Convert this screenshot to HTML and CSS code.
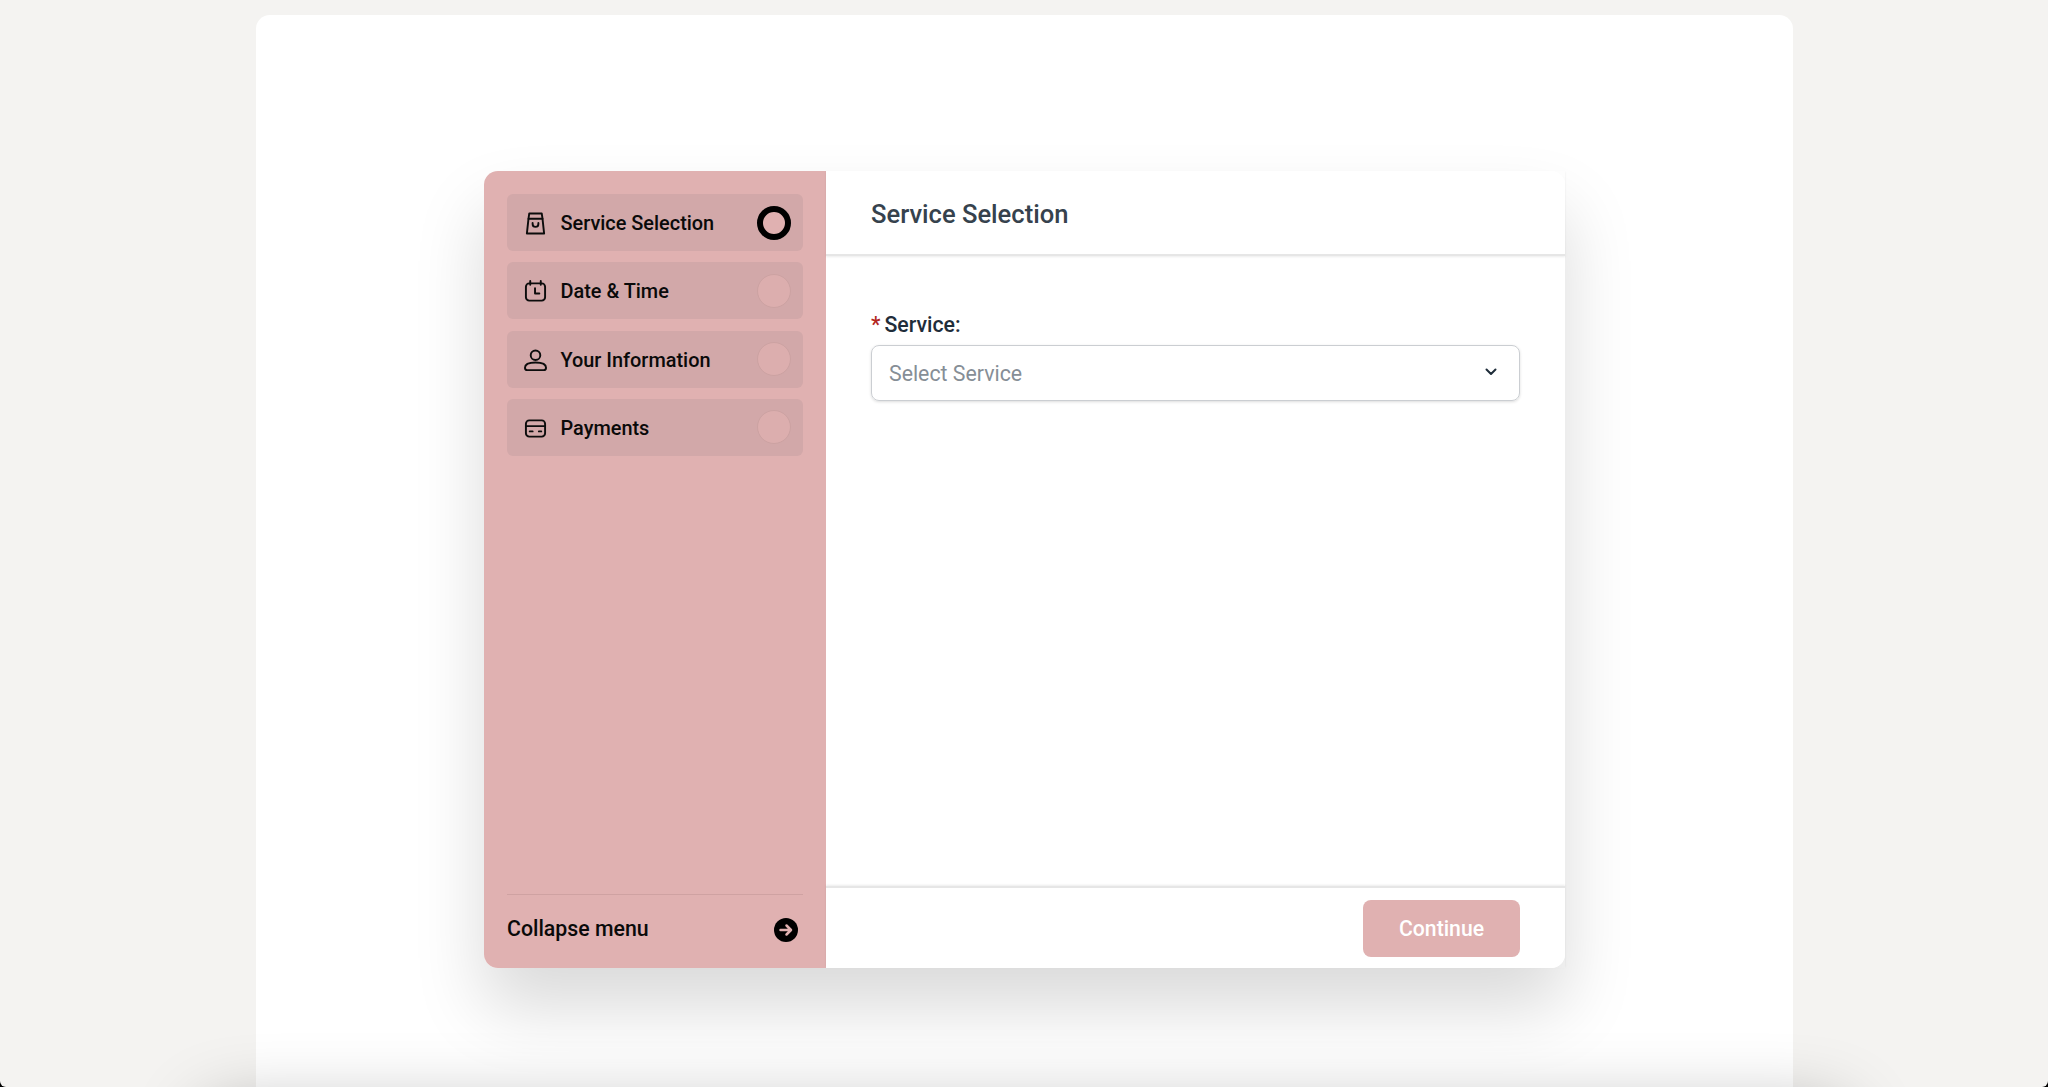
FILE: index.html
```html
<!DOCTYPE html>
<html lang="en">
<head>
    <meta charset="UTF-8">
    <meta name="viewport" content="width=device-width, initial-scale=1.0">
    <title>Booking</title>
    <link rel="stylesheet" href="styles.css">
</head>
<body>
    <div class="page-card">
        <div class="booking">
            <aside class="sidebar">
                <ul class="steps">
                    <li class="step">
                        <svg class="step-icon" viewBox="0 0 24 24"><path d="M5.500 1.500h13l.8 5.500 1.700 15.500H3L4.700 7z"/><path d="M4.700 7h14.600"/><path d="M9 11.500v1a3 3 0 0 0 6 0v-1"/></svg>
                        <span class="step-label">Service Selection</span>
                        <span class="step-dot active"></span>
                    </li>
                    <li class="step">
                        <svg class="step-icon" viewBox="0 0 24 24"><rect x="2" y="3.500" width="20" height="18" rx="3.500"/><path d="M6.500 1v4M17.500 1v4"/><path d="M11.500 8.500v5.500H16"/></svg>
                        <span class="step-label">Date &amp; Time</span>
                        <span class="step-dot"></span>
                    </li>
                    <li class="step">
                        <svg class="step-icon" viewBox="0 0 24 24"><circle cx="12" cy="6.500" r="5"/><path d="M1 19.500c0-3.800 4.900-5.500 11-5.500s11 1.700 11 5.500c0 1.600-1 2.500-2.400 2.500H3.400C2 22 1 21.100 1 19.500z"/></svg>
                        <span class="step-label">Your Information</span>
                        <span class="step-dot"></span>
                    </li>
                    <li class="step">
                        <svg class="step-icon" viewBox="0 0 24 24"><rect x="2" y="3.500" width="20" height="17" rx="3.500"/><path d="M2 9.500h20"/><path d="M6 15h3M15.500 15h2.500"/></svg>
                        <span class="step-label">Payments</span>
                        <span class="step-dot"></span>
                    </li>
                </ul>
                <div class="collapse">
                    <span>Collapse menu</span>
                    <svg class="collapse-icon" viewBox="0 0 24 24"><circle cx="12" cy="12" r="12" class="collapse-disc"/><path d="M6.500 12h10M12.500 7.500l4.500 4.500-4.500 4.500" class="collapse-arrow"/></svg>
                </div>
            </aside>
            <main class="content">
                <header class="content-header">Service Selection</header>
                <div class="form">
                    <label class="field-label"><span class="required">*</span>Service:</label>
                    <div class="select">
                        <span>Select Service</span>
                        <svg class="chevron" viewBox="0 0 12 8"><path d="M1.500 1.500L6 6l4.500-4.500"/></svg>
                    </div>
                </div>
                <footer class="content-footer">
                    <button class="continue">Continue</button>
                </footer>
            </main>
        </div>
    </div>
    <div class="bottom-shade"><div class="next-section"></div></div>
</body>
</html>
```

FILE: styles.css
```css
html {
    height: 100%;
    background-color: black;
}
body {
    height: 100%;
    margin: 0;
    background-color: #f4f3f1;
    font-family: Roboto, Arial, sans-serif;
    overflow: hidden;
    position: relative;
    border-radius: 0 0 6px 6px;
}
.page-card {
    width: 1537px;
    height: 1072px;
    margin: 15px 0 0 256px;
    padding: 156px 0 0 228px;
    box-sizing: border-box;
    background-color: white;
    border-radius: 14px 14px 0 0;
}
.bottom-shade {
    position: absolute;
    left: 0;
    right: 0;
    bottom: 0;
    height: 120px;
    overflow: hidden;
}
.next-section {
    position: absolute;
    left: 200px;
    top: 140px;
    width: 1650px;
    height: 100px;
    border-radius: 30px;
    box-shadow: 0 0 70px rgba(0, 0, 0, 0.29);
}
.booking {
    display: flex;
    width: 1081px;
    height: 797px;
    border-radius: 14px;
    box-shadow: 0 40px 70px rgba(0, 0, 0, 0.15);
}
.sidebar {
    width: 342px;
    padding: 23px 23px 0;
    box-sizing: border-box;
    background-color: #e0b1b1;
    border-radius: 14px 0 0 14px;
    display: flex;
    flex-direction: column;
    justify-content: space-between;
}
.steps {
    list-style: none;
    margin: 0;
    padding: 0;
    display: flex;
    flex-direction: column;
    gap: 11.300px;
}
.step {
    height: 57px;
    padding: 0 12px 0 17px;
    display: flex;
    align-items: center;
    background-color: #d2a8a9;
    border-radius: 6px;
}
.step-icon {
    width: 23px;
    height: 23px;
    margin-top: 2px;
    fill: none;
    stroke: #0c0c0c;
    stroke-width: 2;
    stroke-linejoin: round;
    stroke-linecap: round;
    flex: none;
}
.step-label {
    flex: 1;
    margin-left: 13.500px;
    padding-top: 2px;
    font-size: 19.900px;
    font-weight: 500;
    color: #0a0a0a;
}
.step-dot {
    width: 34px;
    height: 34px;
    box-sizing: border-box;
    border-radius: 50%;
    background-color: #dcaeae;
    border: 1px solid #cca2a2;
}
.step-dot.active {
    background-color: #e0b1b1;
    border: 6px solid black;
}
.collapse {
    height: 66px;
    padding: 0 5px 7px 0;
    border-top: 1px solid #cfa2a2;
    display: flex;
    align-items: center;
    justify-content: space-between;
    font-size: 21.300px;
    font-weight: 500;
    color: #0a0a0a;
}
.collapse-icon {
    width: 24px;
    height: 24px;
    margin-top: 3px;
}
.collapse-disc {
    fill: black;
}
.collapse-arrow {
    fill: none;
    stroke: #e0b1b1;
    stroke-width: 2.500;
    stroke-linecap: round;
    stroke-linejoin: round;
}
.content {
    flex: 1;
    display: flex;
    flex-direction: column;
    background-color: white;
    border-radius: 0 14px 14px 0;
}
.content-header {
    height: 85px;
    padding: 2px 0 0 45px;
    box-sizing: border-box;
    display: flex;
    align-items: center;
    font-size: 25.550px;
    font-weight: 500;
    color: #36424d;
    border-bottom: 2px solid #e6e6e6;
    box-shadow: 0 1px 2px rgba(0, 0, 0, 0.08);
}
.form {
    flex: 1;
    padding: 56px 45px 0;
}
.field-label {
    display: block;
    font-size: 21.300px;
    font-weight: 500;
    color: #1f2d3a;
    margin-bottom: 8px;
}
.required {
    color: #b3261e;
    margin-right: 4px;
}
.select {
    height: 56px;
    padding: 0 22px 0 17px;
    box-sizing: border-box;
    display: flex;
    align-items: center;
    justify-content: space-between;
    border: 1px solid #cbced2;
    border-radius: 8px;
    box-shadow: 0 1px 3px rgba(0, 0, 0, 0.14);
    font-size: 21.300px;
    color: #868e96;
}
.chevron {
    width: 12px;
    height: 8px;
    margin-bottom: 3px;
    fill: none;
    stroke: #1f2d3a;
    stroke-width: 2;
    stroke-linecap: round;
    stroke-linejoin: round;
}
.content-footer {
    height: 82px;
    padding: 12px 45px 0 0;
    box-sizing: border-box;
    display: flex;
    justify-content: flex-end;
    align-items: flex-start;
    border-top: 2px solid #e6e6e6;
    box-shadow: 0 -1px 2px rgba(0, 0, 0, 0.08);
}
.continue {
    width: 157px;
    height: 57px;
    border: none;
    border-radius: 8px;
    background-color: #e0b1b1;
    color: white;
    font-family: inherit;
    font-size: 21.200px;
    font-weight: 500;
}
```
